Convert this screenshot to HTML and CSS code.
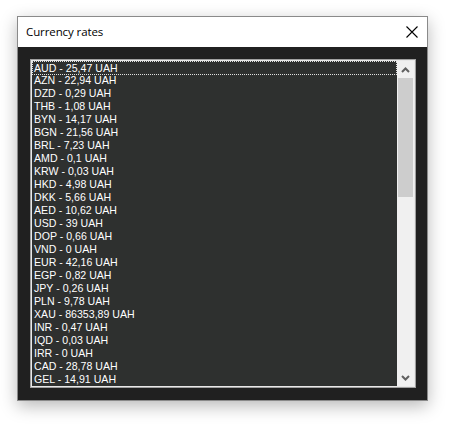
FILE: index.html
```html
<!DOCTYPE html>
<html>
<head>
<meta charset="utf-8">
<link rel="stylesheet" href="styles.css">
</head>
<body>
<div class="window">
  <div class="titlebar">
    <span class="title">Currency rates</span>
    <svg class="close" width="12" height="12" viewBox="0 0 12 12"><path d="M0.5 0.5 L11.5 11.5 M11.5 0.5 L0.5 11.5" stroke="#000" stroke-width="1.1" fill="none"/></svg>
  </div>
  <div class="body">
    <div class="listbox">
      <ul class="items">
        <li class="focused">AUD - 25,47 UAH</li>
        <li>AZN - 22,94 UAH</li>
        <li>DZD - 0,29 UAH</li>
        <li>THB - 1,08 UAH</li>
        <li>BYN - 14,17 UAH</li>
        <li>BGN - 21,56 UAH</li>
        <li>BRL - 7,23 UAH</li>
        <li>AMD - 0,1 UAH</li>
        <li>KRW - 0,03 UAH</li>
        <li>HKD - 4,98 UAH</li>
        <li>DKK - 5,66 UAH</li>
        <li>AED - 10,62 UAH</li>
        <li>USD - 39 UAH</li>
        <li>DOP - 0,66 UAH</li>
        <li>VND - 0 UAH</li>
        <li>EUR - 42,16 UAH</li>
        <li>EGP - 0,82 UAH</li>
        <li>JPY - 0,26 UAH</li>
        <li>PLN - 9,78 UAH</li>
        <li>XAU - 86353,89 UAH</li>
        <li>INR - 0,47 UAH</li>
        <li>IQD - 0,03 UAH</li>
        <li>IRR - 0 UAH</li>
        <li>CAD - 28,78 UAH</li>
        <li>GEL - 14,91 UAH</li>
      </ul>
      <div class="scrollbar">
        <div class="arrow">
          <svg width="9" height="6" viewBox="0 0 9 6"><path d="M1 5 L4.5 1.5 L8 5" stroke="#606060" stroke-width="2" fill="none"/></svg>
        </div>
        <div class="track"><div class="thumb"></div></div>
        <div class="arrow">
          <svg width="9" height="6" viewBox="0 0 9 6"><path d="M1 1 L4.5 4.5 L8 1" stroke="#606060" stroke-width="2" fill="none"/></svg>
        </div>
      </div>
    </div>
  </div>
</div>
</body>
</html>
```

FILE: styles.css
```css
html, body {
  margin: 0;
  padding: 0;
  background: #ffffff;
}
body {
  width: 450px;
  height: 424px;
  overflow: hidden;
  padding-top: 16px;
  padding-left: 17px;
  box-sizing: border-box;
}
.window {
  width: 411px;
  height: 385px;
  box-sizing: border-box;
  border: 1px solid #8a8a8a;
  box-shadow: 0 5px 16px rgba(0, 0, 0, 0.28);
  display: flex;
  flex-direction: column;
  background: #202020;
}
.titlebar {
  height: 30px;
  background: #ffffff;
  display: flex;
  align-items: center;
  justify-content: space-between;
  padding: 0 9px 2px 8px;
  box-sizing: border-box;
  flex: none;
}
.title {
  font-family: "Open Sans", "Noto Sans", sans-serif;
  font-size: 11.5px;
  color: #000;
  letter-spacing: -0.1px;
}
.close {
  display: block;
  margin-top: 2px;
}
.body {
  flex: 1;
  padding: 12px 11px 13px 12px;
  display: flex;
}
.listbox {
  flex: 1;
  display: flex;
  border: 1px solid #a0a0a0;
  box-shadow: inset 0 0 0 1px #e8e8e8;
  padding: 1px;
  background: #2e302f;
  overflow: hidden;
}
.items {
  list-style: none;
  margin: 0;
  padding: 0;
  flex: 1;
  font-family: "Liberation Sans", Arial, sans-serif;
  font-size: 10.6px;
  color: #ffffff;
  overflow: hidden;
}
.items li {
  height: 13px;
  line-height: 13px;
  padding-left: 2px;
  white-space: nowrap;
  box-sizing: border-box;
}
.items li.focused {
  outline: 1px dotted #e0e0e0;
  outline-offset: -1px;
  height: 14px;
  line-height: 14px;
  margin-bottom: -1px;
}
.scrollbar {
  width: 17px;
  flex: none;
  background: #f0f0f0;
  display: flex;
  flex-direction: column;
}
.arrow {
  height: 17px;
  display: flex;
  align-items: center;
  justify-content: center;
  flex: none;
}
.track {
  flex: 1;
  padding: 0 1px;
}
.thumb {
  height: 119px;
  background: #cdcdcd;
}
```
